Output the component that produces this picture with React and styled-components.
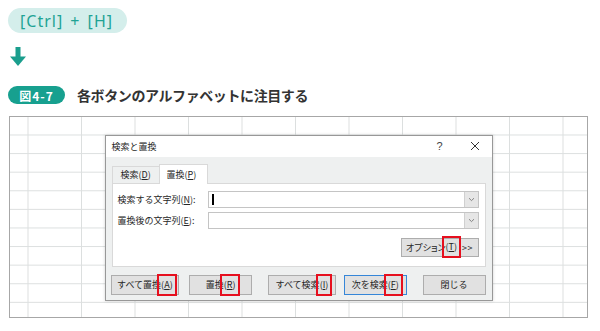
import React from 'react';
import styled, { createGlobalStyle } from 'styled-components';

const GlobalStyle = createGlobalStyle`
  body {
    margin: 0;
    background: #fff;
    font-family: "Noto Sans CJK JP", "Noto Sans", sans-serif;
  }
`

const Page = styled.div`
  width: 600px;
  height: 331px;
  padding: 8px 0 0 8px;
  box-sizing: border-box;
  display: flex;
  flex-direction: column;
  align-items: flex-start;
`

const KeyPill = styled.div`
  height: 25px;
  width: 119px;
  box-sizing: border-box;
  padding-left: 12px;
  display: flex;
  align-items: center;
  border-radius: 13px;
  background: #d4eeeb;
  color: #1fa394;
  font-family: "Noto Sans", sans-serif;
  font-size: 16px;
  letter-spacing: 1px;
  word-spacing: 2px;
`

const ArrowIcon = styled.svg`
  margin: 14px 0 0 2px;
  display: block;
`

const CaptionRow = styled.div`
  margin-top: 19px;
  display: flex;
  align-items: center;
  gap: 12px;
`

const Badge = styled.div`
  width: 57px;
  height: 18px;
  border-radius: 9px;
  background: #17a08f;
  color: #fff;
  font-size: 12px;
  font-weight: 700;
  display: flex;
  align-items: center;
  justify-content: center;
  letter-spacing: 1px;
`

const Caption = styled.div`
  font-size: 14px;
  font-weight: 700;
  color: #333;
  letter-spacing: -0.4px;
`

const Sheet = styled.div`
  margin: 11px 0 0 1px;
  width: 579px;
  height: 202px;
  box-sizing: border-box;
  border: 1.5px solid #a7a7a7;
  background-color: #fff;
  background-image:
    linear-gradient(to right, #dcdfdf 1px, transparent 1px),
    linear-gradient(to bottom, #dcdfdf 1px, transparent 1px);
  background-size: 53.5px 100%, 100% 18.6px;
  background-position: 17.5px 0, 0 17.5px;
  padding: 17.5px 0 0 94.5px;
`

const Dialog = styled.div`
  width: 388px;
  height: 166px;
  box-sizing: border-box;
  border: 1px solid #989898;
  background: #eef0f0;
  box-shadow: 0 0 3px rgba(0, 0, 0, 0.18);
  display: flex;
  flex-direction: column;
  font-size: 9px;
  color: #262626;
`

const TitleBar = styled.div`
  height: 21px;
  flex: none;
  background: #fff;
  display: flex;
  align-items: center;
  padding: 0 12px 0 6px;
`

const TitleText = styled.div`
  flex: 1;
`

const Help = styled.span`
  font-family: "Liberation Sans", sans-serif;
  font-size: 11px;
  color: #444;
  margin-right: 27px;
`

const Body = styled.div`
  padding: 7px 6px 0;
  display: flex;
  flex-direction: column;
`

const TabRow = styled.div`
  display: flex;
  align-items: flex-end;
  height: 20px;
  position: relative;
  z-index: 1;
`

const Tab = styled.div`
  box-sizing: border-box;
  width: ${(p) => (p.active ? '49px' : '47px')};
  height: ${(p) => (p.active ? '20px' : '18px')};
  padding-left: ${(p) => (p.active ? '7px' : '8px')};
  display: flex;
  align-items: center;
  background: ${(p) => (p.active ? '#fff' : 'transparent')};
  border: 1px solid #d9d9d9;
  border-bottom: ${(p) => (p.active ? 'none' : '1px solid #d9d9d9')};
  border-right: ${(p) => (p.active ? '1px solid #d9d9d9' : 'none')};
`

const Panel = styled.div`
  margin-top: -1px;
  height: 84px;
  box-sizing: border-box;
  background: #fff;
  border: 1px solid #d9d9d9;
  padding: 7px 6px 0 5px;
  display: flex;
  flex-direction: column;
`

const FieldRow = styled.div`
  display: flex;
  align-items: center;
  height: 17px;
  margin-bottom: 4px;
`

const FieldLabel = styled.div`
  width: 90px;
  flex: none;
`

const Input = styled.div`
  flex: 1;
  height: 17px;
  box-sizing: border-box;
  border: 1px solid #c4c4c4;
  display: flex;
  align-items: center;
`

const Caret = styled.div`
  width: 2px;
  height: 11px;
  margin-left: 3px;
  background: #000;
`

const DropButton = styled.div`
  margin-left: auto;
  width: 13px;
  height: 100%;
  background: #e6e6e6;
  border-left: 1px solid #d0d0d0;
  display: flex;
  align-items: center;
  justify-content: center;
`

const OptionRow = styled.div`
  display: flex;
  justify-content: flex-end;
  margin-top: 5px;
`

const Button = styled.div`
  box-sizing: border-box;
  width: ${(p) => p.w}px;
  height: ${(p) => p.h || 20}px;
  margin-left: ${(p) => p.gap || 0}px;
  background: #e1e1e1;
  border: 1px solid ${(p) => (p.primary ? '#3586d8' : '#adadad')};
  display: flex;
  align-items: center;
  justify-content: center;
  white-space: nowrap;
  font-feature-settings: ${(p) => (p.tight ? '"palt"' : 'normal')};
`

const Arrows = styled.span`
  margin-left: 5px;
  letter-spacing: 0.5px;
`

const ButtonRow = styled.div`
  display: flex;
  margin-top: 8px;
  padding-left: 0;
`

const Mark = styled.span`
  position: relative;
  display: inline-block;
  line-height: 12px;
  letter-spacing: 0;

  &::after {
    content: '';
    position: absolute;
    top: -5px;
    bottom: -5px;
    left: -4px;
    right: -4px;
    border: 2px solid #e60f1e;
  }
`

const Chevron = () => (
  <svg width="7" height="5" viewBox="0 0 7 5">
    <path d="M1 1.2 L3.5 3.6 L6 1.2" fill="none" stroke="#777" strokeWidth="0.9" />
  </svg>
)

const CloseIcon = () => (
  <svg width="10" height="10" viewBox="0 0 10 10">
    <path d="M1 1 L9 9 M9 1 L1 9" stroke="#333" strokeWidth="1" />
  </svg>
)

const Key = ({ k, marked }) => {
  const inner = (
    <>
      (<u>{k}</u>)
    </>
  )
  return marked ? <Mark>{inner}</Mark> : inner
}

const App = () => {
  return (
    <Page>
      <GlobalStyle />
      <KeyPill>[Ctrl] + [H]</KeyPill>
      <ArrowIcon width="16" height="19" viewBox="0 0 16 19">
        <rect x="5.5" y="0" width="5" height="11" fill="#1a9e8d" />
        <path d="M0 9.5 H16 L8 19 Z" fill="#1a9e8d" />
      </ArrowIcon>
      <CaptionRow>
        <Badge>図4-7</Badge>
        <Caption>各ボタンのアルファベットに注目する</Caption>
      </CaptionRow>
      <Sheet>
        <Dialog>
          <TitleBar>
            <TitleText>検索と置換</TitleText>
            <Help>?</Help>
            <CloseIcon />
          </TitleBar>
          <Body>
            <TabRow>
              <Tab>検索<Key k="D" /></Tab>
              <Tab active>置換<Key k="P" /></Tab>
            </TabRow>
            <Panel>
              <FieldRow>
                <FieldLabel>検索する文字列(<u>N</u>):</FieldLabel>
                <Input>
                  <Caret />
                  <DropButton><Chevron /></DropButton>
                </Input>
              </FieldRow>
              <FieldRow>
                <FieldLabel>置換後の文字列(<u>E</u>):</FieldLabel>
                <Input>
                  <DropButton><Chevron /></DropButton>
                </Input>
              </FieldRow>
              <OptionRow>
                <Button w={78} h={19} tight>
                  オプション<Key k="T" marked /><Arrows>&gt;&gt;</Arrows>
                </Button>
              </OptionRow>
            </Panel>
            <ButtonRow>
              <Button w={69} gap={-1}>すべて置換<Key k="A" marked /></Button>
              <Button w={63} gap={10}>置換<Key k="R" marked /></Button>
              <Button w={68} gap={16}>すべて検索<Key k="I" marked /></Button>
              <Button w={63} gap={8} primary>次を検索<Key k="F" marked /></Button>
              <Button w={63} gap={16}>閉じる</Button>
            </ButtonRow>
          </Body>
        </Dialog>
      </Sheet>
    </Page>
  )
}

export default App;
